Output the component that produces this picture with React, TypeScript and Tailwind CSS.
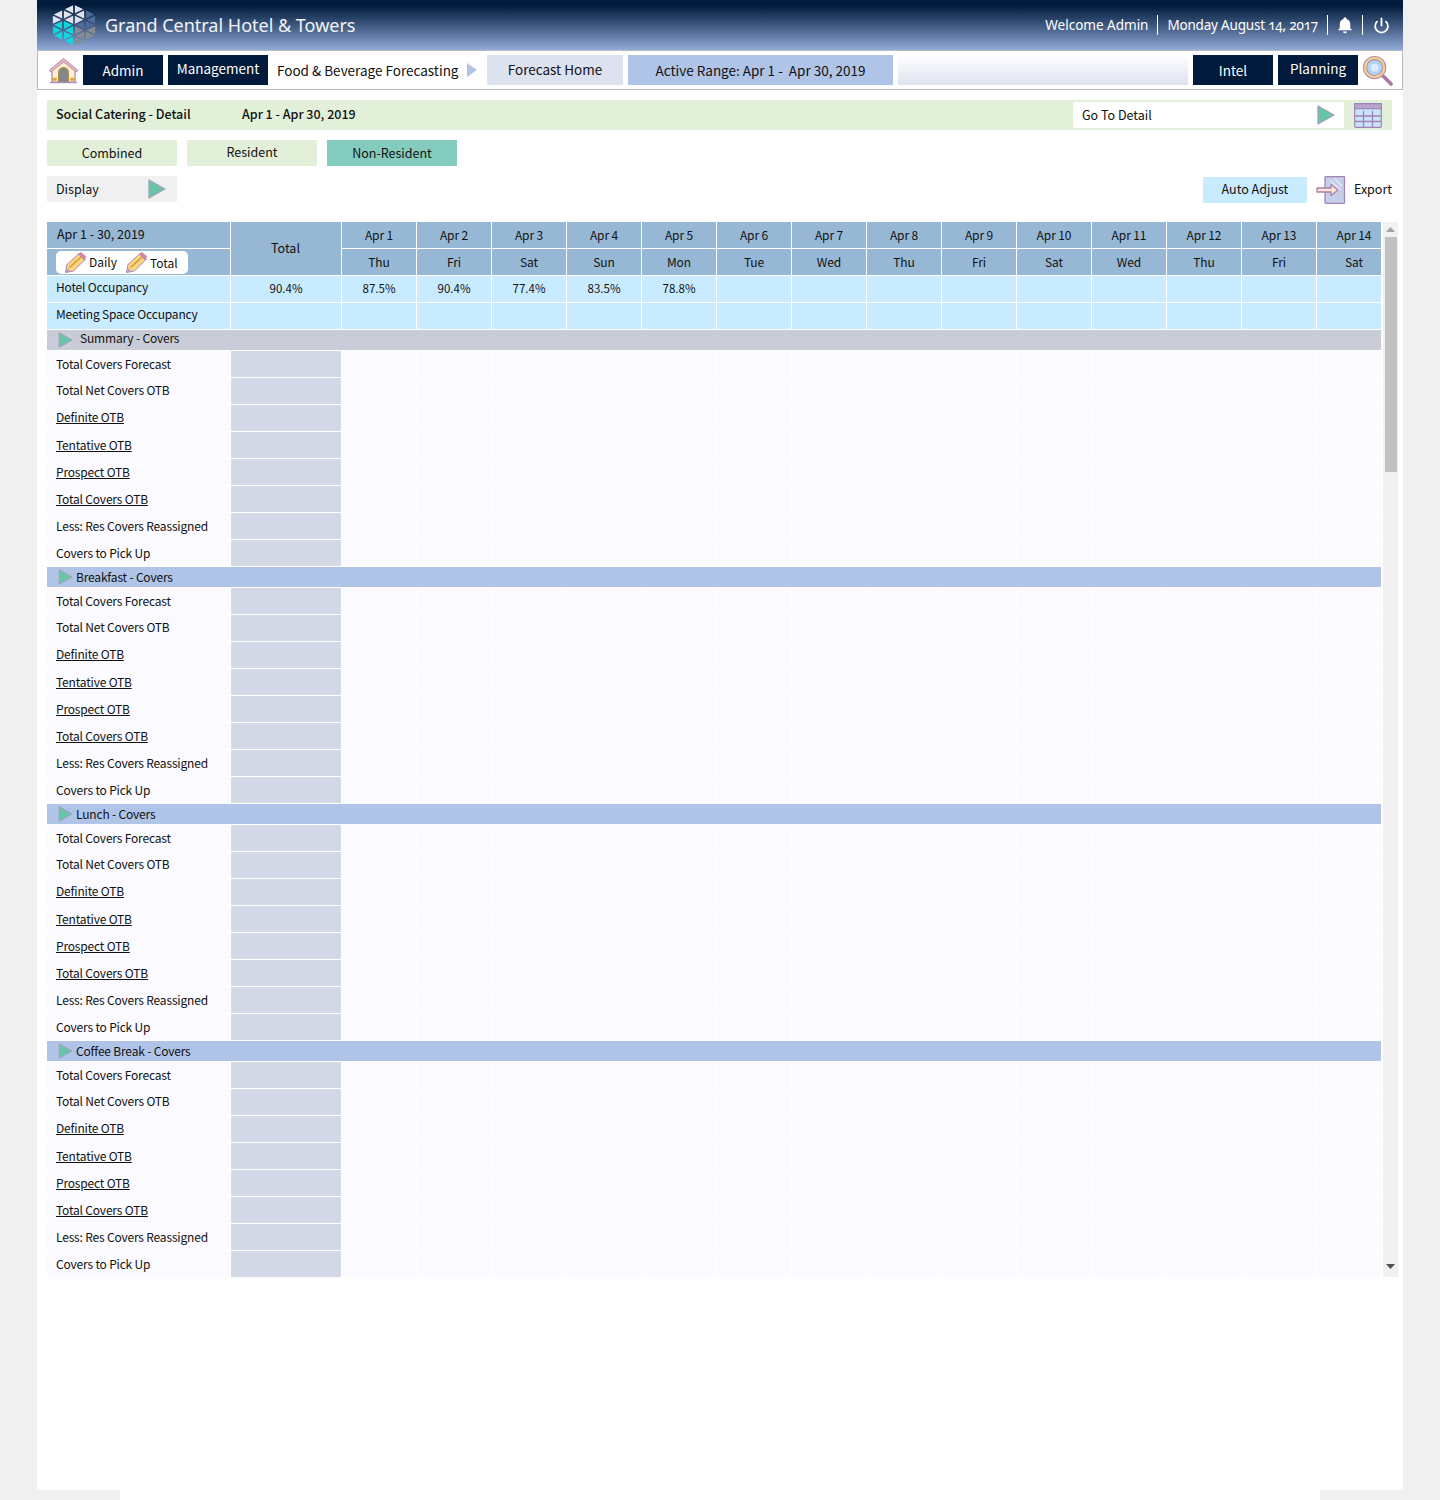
import { Power } from 'lucide-react'

const font = { fontFamily: '"Noto Sans CJK SC", "Noto Sans", sans-serif' }

const dates = ['Apr 1', 'Apr 2', 'Apr 3', 'Apr 4', 'Apr 5', 'Apr 6', 'Apr 7', 'Apr 8', 'Apr 9', 'Apr 10', 'Apr 11', 'Apr 12', 'Apr 13', 'Apr 14']
const days = ['Thu', 'Fri', 'Sat', 'Sun', 'Mon', 'Tue', 'Wed', 'Thu', 'Fri', 'Sat', 'Wed', 'Thu', 'Fri', 'Sat']
const occupancy = ['87.5%', '90.4%', '77.4%', '83.5%', '78.8%', '', '', '', '', '', '', '', '', '']
const blanks = Array.from({ length: 14 }, () => '')

const coverRows = [
  { label: 'Total Covers Forecast', link: false, up: false },
  { label: 'Total Net Covers OTB', link: false, up: true },
  { label: 'Definite OTB', link: true, up: true },
  { label: 'Tentative OTB', link: true, up: false },
  { label: 'Prospect OTB', link: true, up: false },
  { label: 'Total Covers OTB', link: true, up: false },
  { label: 'Less: Res Covers Reassigned', link: false, up: false },
  { label: 'Covers to Pick Up', link: false, up: false },
]

const sections = [
  { title: 'Summary - Covers', summary: true },
  { title: 'Breakfast - Covers', summary: false },
  { title: 'Lunch - Covers', summary: false },
  { title: 'Coffee Break - Covers', summary: false },
]

function PlayArrow({ className }: { className: string }) {
  return (
    <svg viewBox="0 0 18 20" className={className}>
      <path d="M1 1 L17 10 L1 19 Z" fill="#66c5a5" stroke="#a3a3c2" strokeWidth="1.4" strokeLinejoin="round" />
    </svg>
  )
}

// triangle lattice clipped to a hexagon
function Logo() {
  const w = 11
  const h = 10.5
  const tris: { pts: string; fill: string }[] = []
  for (let c = 0; c < 4; c++) {
    const off = c % 2 === 0 ? 0 : h / 2
    for (let j = -1; j < 5; j++) {
      const x0 = c * w
      const y0 = j * h + off
      const shapes = [
        [[x0, y0], [x0, y0 + h], [x0 + w, y0 + h / 2]],
        [[x0 + w, y0 + h / 2], [x0 + w, y0 + h + h / 2], [x0, y0 + h]],
      ]
      for (const s of shapes) {
        const cx = (s[0][0] + s[1][0] + s[2][0]) / 3
        const cy = (s[0][1] + s[1][1] + s[2][1]) / 3
        if (cy < 1 || cy > 41) continue
        if (Math.abs(cy - 21) + Math.abs(cx - 22) * 0.45 > 20.5) continue
        let fill = '#dfe3ee'
        if (cy >= 17) fill = cx < 22 ? '#0fd6df' : cy > 22 ? '#878c94' : '#4d6a98'
        else if (cx > 33 && cy > 9) fill = '#4d6a98'
        const pts = s.map((p) => `${cx + (p[0] - cx) * 0.76},${cy + (p[1] - cy) * 0.76}`).join(' ')
        tris.push({ pts, fill })
      }
    }
  }
  return (
    <svg viewBox="0 0 44 42" className="h-[42px] w-[44px] shrink-0">
      {tris.map((t, i) => (
        <polygon key={i} points={t.pts} fill={t.fill} />
      ))}
    </svg>
  )
}

function HomeIcon() {
  return (
    <svg viewBox="0 0 32 28" className="h-[27px] w-[31px] shrink-0">
      <path d="M4 13 L16 3 L28 13 V26 H4 Z" fill="#fdf0cf" stroke="#a98cc0" strokeWidth="1.3" />
      <path d="M1 14 L16 1.5 L31 14 L29 15.5 L16 5 L3 15.5 Z" fill="#f3b3a8" stroke="#a98cc0" strokeWidth="1" strokeLinejoin="round" />
      <path d="M11 26 V16 a5 5 0 0 1 10 0 V26 Z" fill="#7f8790" stroke="#b58a3e" strokeWidth="1.4" />
      <path d="M4 23 H9 M23 23 H28" stroke="#d6a84a" strokeWidth="3" />
      <path d="M2 26.5 H30" stroke="#a98cc0" strokeWidth="1.4" />
    </svg>
  )
}

function SearchIcon() {
  return (
    <svg viewBox="0 0 32 32" className="h-[31px] w-[31px] shrink-0">
      <path d="M21 21 L30 30" stroke="#a5799e" strokeWidth="3.6" strokeLinecap="round" />
      <circle cx="13" cy="13" r="11.5" fill="#f8d57c" stroke="#a98cc0" strokeWidth="1.1" />
      <circle cx="13" cy="13" r="8.200" fill="#b5d4f3" stroke="#a98cc0" strokeWidth="1.1" />
      <circle cx="13" cy="13" r="4" fill="#dcecfb" />
    </svg>
  )
}

function CalendarIcon() {
  return (
    <svg viewBox="0 0 28 25" className="h-[25px] w-[28px] shrink-0">
      <rect x="0.7" y="0.7" width="26.6" height="23.6" rx="1" fill="#c9e4fb" stroke="#a283b8" strokeWidth="1.2" />
      <rect x="0.7" y="0.7" width="26.6" height="5" fill="#b9a6cc" stroke="#a283b8" strokeWidth="1.2" />
      <path d="M1 13 H27 M1 18.500 H27 M9.500 8 V24 M18.500 8 V24" stroke="#a283b8" strokeWidth="1.3" />
    </svg>
  )
}

function ExportIcon() {
  return (
    <svg viewBox="0 0 30 28" className="h-[28px] w-[30px] shrink-0">
      <rect x="9" y="0.7" width="19.500" height="26.600" rx="0.5" fill="#c6cfe9" stroke="#a283b8" strokeWidth="1.3" />
      <path d="M14 4 L24 14 M19 3 L26 10" stroke="#e3e8f6" strokeWidth="1.5" />
      <path d="M1 12 H15 V8.500 L22 14 L15 19.500 V16 H1 Z" fill="#fbe6d6" stroke="#a87fa6" strokeWidth="1.3" strokeLinejoin="round" />
    </svg>
  )
}

function PencilIcon() {
  return (
    <svg viewBox="0 0 21 21" className="h-[21px] w-[21px] shrink-0">
      <path d="M0.500 20.500 L2 12.500 L14 1.500 L20.500 7 L8.500 19 Z" fill="#fbd47a" stroke="#a98cc0" strokeWidth="1" strokeLinejoin="round" />
      <path d="M4.500 15.500 L16 5" stroke="#c9973f" strokeWidth="1.200" />
      <path d="M13.500 2 L16 0.500 L20.800 4.500 L19 8 Z" fill="#ec7f97" stroke="#a98cc0" strokeWidth="0.8" />
      <path d="M0.500 20.500 L1.400 15.500 L5.500 19.500 Z" fill="#b79cc9" />
    </svg>
  )
}

function NavDark({ label, up }: { label: string; up?: boolean }) {
  return (
    <div className={`flex h-[30px] shrink-0 items-center justify-center bg-[#021a3b] text-[13.5px] text-white ${up ? 'pb-1' : ''} ${label === 'Management' ? 'w-[100px]' : 'w-[80px]'}`}>
      {label}
    </div>
  )
}

function TabButton({ label, active, up }: { label: string; active?: boolean; up?: boolean }) {
  return (
    <div className={`flex h-[26px] w-[130px] items-center justify-center text-[12.5px] text-[#111] ${active ? 'bg-[#83ccbd]' : 'bg-[#e2efd9]'} ${up ? 'pb-0.5' : ''}`}>
      {label}
    </div>
  )
}

function HeaderCell({ children, up }: { children: React.ReactNode; up?: boolean }) {
  return (
    <div className={`flex h-[27px] items-center justify-center border-r border-b border-white bg-[#97b8d5] text-[12px] tracking-[-0.1px] text-[#111] ${up ? 'pb-0.5' : ''}`}>
      {children}
    </div>
  )
}

function InfoRow({ label, total, values }: { label: string; total: string; values: string[] }) {
  return (
    <>
      <div className="flex h-[27px] items-center border-r border-b border-white bg-[#c9ebff] pb-1 pl-[9px] text-[12px] tracking-[-0.18px] text-[#111]">{label}</div>
      <div className="flex h-[27px] items-center justify-center border-r border-b border-white bg-[#c9ebff] text-[11.5px] text-[#111]">{total}</div>
      {values.map((value, i) => (
        <div key={i} className="flex h-[27px] items-center justify-center border-r border-b border-white bg-[#c9ebff] text-[11.5px] text-[#111]">
          {value}
        </div>
      ))}
    </>
  )
}

function CoverRow({ label, link, up }: { label: string; link: boolean; up: boolean }) {
  return (
    <>
      <div className={`flex h-[27px] items-center border-r border-b border-white bg-[#fafaff] pl-[9px] text-[12px] tracking-[-0.18px] text-[#111] ${up ? 'pb-0.5' : ''}`}>
        <span className={link ? 'underline' : ''}>{label}</span>
      </div>
      <div className="h-[27px] border-r border-b border-white bg-[#d2d8e5]" />
      {blanks.map((_, i) => (
        <div key={i} className="h-[27px] border-r border-b border-white bg-[#fafaff]" />
      ))}
    </>
  )
}

function SectionRow({ title, summary }: { title: string; summary: boolean }) {
  return (
    <div className={`col-span-full flex h-[21px] items-center border-b border-white pl-[11px] text-[12px] tracking-[-0.18px] text-[#111] ${summary ? 'gap-[7px] bg-[#c9ccd6]' : 'gap-[3px] bg-[#b0c4e8]'}`}>
      <PlayArrow className="h-[16px] w-[15px] shrink-0" />
      <span className={summary ? 'pb-1' : ''}>{title}</span>
    </div>
  )
}

export default function App() {
  return (
    <div className="min-h-[1500px] bg-[#f0f0f0]" style={font}>
      <div className="mx-auto flex h-[1490px] w-[1366px] flex-col bg-white">
        <header className="flex h-[50px] shrink-0 items-center bg-gradient-to-b from-[#021a3b] from-10% to-[#92acda] pr-[4px] pl-[15px] text-white">
          <Logo />
          <div className="ml-[9px] text-[18px] text-[#f2f4f8]" style={{ fontFamily: '"Noto Sans", sans-serif' }}>
            Grand Central Hotel &amp; Towers
          </div>
          <div className="ml-auto flex items-center text-[13.5px] oldstyle-nums" style={{ fontFamily: '"Noto Sans", sans-serif' }}>
            <span className="border-r border-white pr-[9px]">Welcome Admin</span>
            <span className="border-r border-white px-[9px] tracking-[-0.2px]">Monday August 14, 2017</span>
            <span className="flex h-[20px] w-[35px] items-center justify-center border-r border-white">
              <svg viewBox="0 0 24 24" className="h-[18px] w-[18px] fill-white">
                <path d="M12 1.500 a2 2 0 0 0 -2 2 v.6 C6.800 5 5 7.800 5 11 v5 l-2.500 3 h19 L19 16 v-5 c0-3.200-1.800-6-5-6.900 v-.6 a2 2 0 0 0 -2-2 Z M9.500 20.500 a2.500 2.500 0 0 0 5 0 Z" />
              </svg>
            </span>
            <span className="flex w-[36px] items-center justify-center">
              <Power className="h-[17px] w-[17px]" strokeWidth={2.6} />
            </span>
          </div>
        </header>

        <nav className="flex h-[40px] shrink-0 items-center border border-[#bbbbbb] pr-[9px] pl-[10px] text-[13.5px] text-[#111]">
          <HomeIcon />
          <div className="ml-[4px]"><NavDark label="Admin" /></div>
          <div className="ml-[5px]"><NavDark label="Management" up /></div>
          <span className="ml-[9px] w-[190px] shrink-0 whitespace-nowrap">Food &amp; Beverage Forecasting</span>
          <svg viewBox="0 0 10 14" className="h-[14px] w-[10px] shrink-0">
            <path d="M0 0 L10 7 L0 14 Z" fill="#b0c4e8" />
          </svg>
          <div className="ml-[10px] flex h-[30px] w-[136px] shrink-0 items-center justify-center bg-[#dde2ef] pb-0.5">Forecast Home</div>
          <div className="ml-[5px] flex h-[30px] w-[265px] shrink-0 items-center justify-center bg-[#b0c4e8] whitespace-pre">Active Range: Apr 1 -  Apr 30, 2019</div>
          <div className="ml-[5px] h-[30px] w-[290px] shrink-0 bg-gradient-to-b from-white to-[#dde2ef]" />
          <div className="ml-[5px]"><NavDark label="Intel" /></div>
          <div className="ml-[5px]"><NavDark label="Planning" up /></div>
          <div className="ml-[4px]"><SearchIcon /></div>
        </nav>

        <div className="mt-[10px] mr-[11px] ml-[10px] flex h-[30px] shrink-0 items-center bg-[#e2efd9] pl-[9px] text-[12.5px] text-[#111]">
          <span className="w-[186px] pb-0.5 font-medium">Social Catering - Detail</span>
          <span className="pb-0.5 font-medium">Apr 1 - Apr 30, 2019</span>
          <div className="ml-auto flex h-[26px] w-[271px] items-center bg-white pr-[9px] pl-[9px]">
            <span>Go To Detail</span>
            <PlayArrow className="ml-auto h-[20px] w-[18px]" />
          </div>
          <div className="mx-[10px]"><CalendarIcon /></div>
        </div>

        <div className="mt-[10px] ml-[10px] flex shrink-0 gap-[10px]">
          <TabButton label="Combined" />
          <TabButton label="Resident" up />
          <TabButton label="Non-Resident" active />
        </div>

        <div className="mt-[10px] mr-[11px] ml-[10px] flex h-[28px] shrink-0 items-center text-[12.5px] text-[#111]">
          <div className="flex h-[26px] w-[130px] items-center self-start bg-[#f0f0f0] pl-[9px]">
            <span>Display</span>
            <PlayArrow className="ml-[49px] h-[20px] w-[18px]" />
          </div>
          <div className="ml-auto flex h-[26px] w-[104px] items-center justify-center bg-[#c9ebff] pb-0.5">Auto Adjust</div>
          <div className="ml-[9px]"><ExportIcon /></div>
          <span className="ml-[8px] pb-0.5">Export</span>
        </div>

        <div className="mt-[18px] ml-[10px] flex h-[1055px] shrink-0">
          <div className="w-[1334px] overflow-hidden">
            <div className="grid w-[1345px] grid-cols-[184px_111px_repeat(14,75px)]">
              <HeaderCell up>
                <span className="w-full pl-[10px] text-left text-[12.5px] tracking-normal">Apr 1 - 30, 2019</span>
              </HeaderCell>
              <div className="row-span-2 flex h-[54px] items-center justify-center border-r border-b border-white bg-[#97b8d5] pr-px text-[12.5px] text-[#111]">Total</div>
              {dates.map((d) => (
                <HeaderCell key={d}>{d}</HeaderCell>
              ))}
              <div className="flex h-[27px] items-center border-r border-b border-white bg-[#97b8d5] pl-[9px]">
                <div className="flex h-[23px] w-[132px] items-center rounded-[5px] bg-white pl-[9px] text-[12px] text-[#111]">
                  <PencilIcon />
                  <span className="ml-[3px]">Daily</span>
                  <span className="ml-[9px]"><PencilIcon /></span>
                  <span className="ml-[3px] pt-px">Total</span>
                </div>
              </div>
              {days.map((d, i) => (
                <HeaderCell key={i}>{d}</HeaderCell>
              ))}
              <InfoRow label="Hotel Occupancy" total="90.4%" values={occupancy} />
              <InfoRow label="Meeting Space Occupancy" total="" values={blanks} />
              {sections.map((s) => (
                <div key={s.title} className="contents">
                  <SectionRow title={s.title} summary={s.summary} />
                  {coverRows.map((r) => (
                    <CoverRow key={r.label} label={r.label} link={r.link} up={r.up} />
                  ))}
                </div>
              ))}
            </div>
          </div>
          <div className="ml-[2px] flex w-[15px] shrink-0 flex-col items-center bg-[#f1f1f1]">
            <svg viewBox="0 0 9 5" className="mt-[5px] h-[5px] w-[9px] fill-[#a3a3a3]">
              <path d="M4.500 0 L9 5 H0 Z" />
            </svg>
            <div className="mt-[5px] ml-px h-[235px] w-[12px] bg-[#c1c1c1]" />
            <svg viewBox="0 0 9 5" className="mt-auto mb-[8px] h-[5px] w-[9px] fill-[#505050]">
              <path d="M0 0 H9 L4.500 5 Z" />
            </svg>
          </div>
        </div>
      </div>
      <div className="mx-auto h-[10px] w-[1200px] bg-white" />
    </div>
  )
}
